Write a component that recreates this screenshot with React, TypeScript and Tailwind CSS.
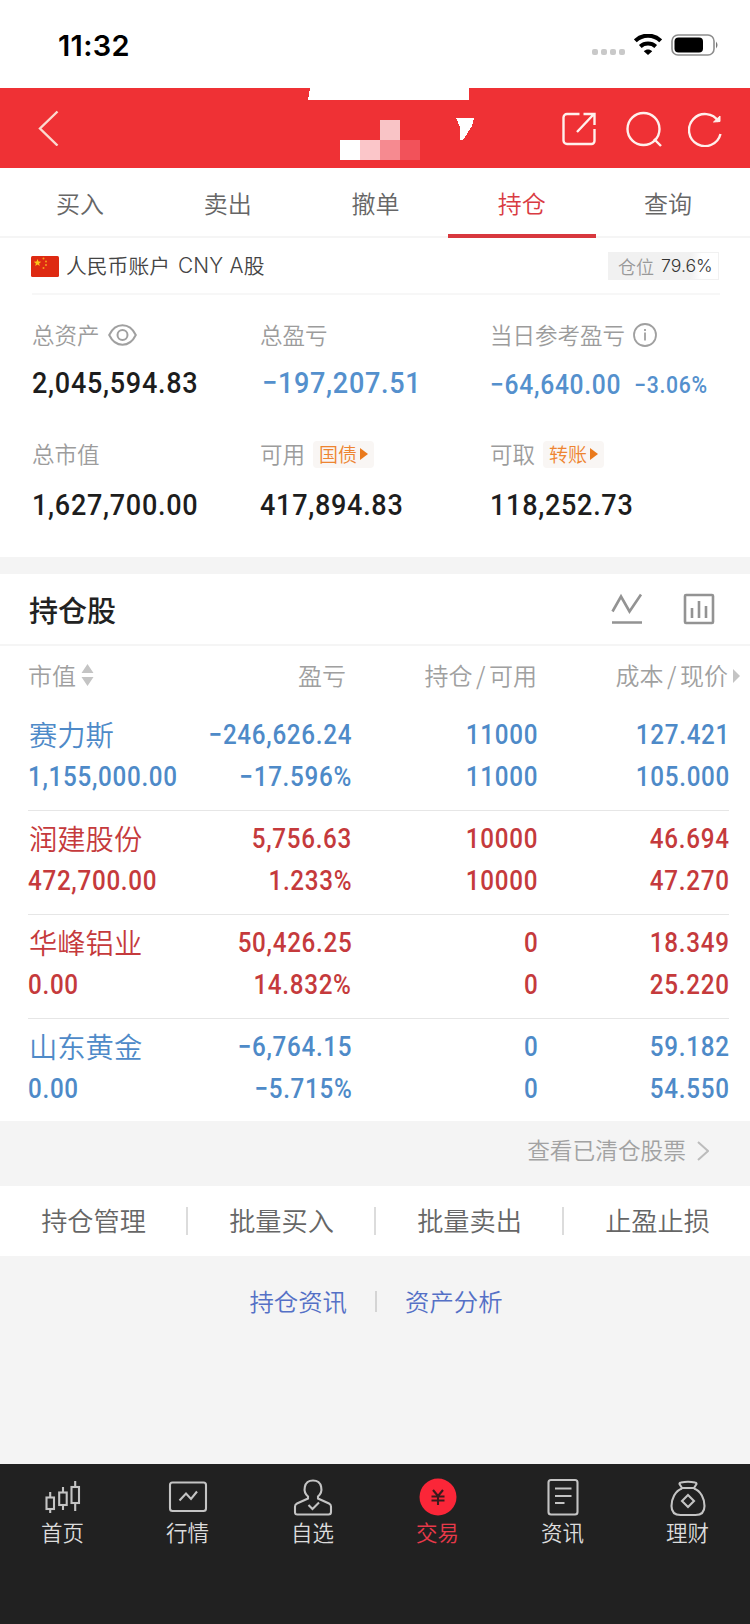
import React from "react";

type Tone = "up" | "down";

const toneClass: Record<Tone, string> = {
  up: "text-[#c53a3c]",
  down: "text-[#4e8ac8]",
};

const holdings: {
  name: string;
  value: string;
  profit: string;
  rate: string;
  held: string;
  usable: string;
  cost: string;
  price: string;
  tone: Tone;
}[] = [
  { name: "赛力斯", value: "1,155,000.00", profit: "−246,626.24", rate: "−17.596%", held: "11000", usable: "11000", cost: "127.421", price: "105.000", tone: "down" },
  { name: "润建股份", value: "472,700.00", profit: "5,756.63", rate: "1.233%", held: "10000", usable: "10000", cost: "46.694", price: "47.270", tone: "up" },
  { name: "华峰铝业", value: "0.00", profit: "50,426.25", rate: "14.832%", held: "0", usable: "0", cost: "18.349", price: "25.220", tone: "up" },
  { name: "山东黄金", value: "0.00", profit: "−6,764.15", rate: "−5.715%", held: "0", usable: "0", cost: "59.182", price: "54.550", tone: "down" },
];

function Num({ children, className = "origin-left scale-x-[0.88]" }: { children: string; className?: string }) {
  return (
    <span className={`inline-block whitespace-nowrap font-['Roboto',sans-serif] font-medium tracking-[0.8px] ${className}`}>
      {children}
    </span>
  );
}

function BigNum({ children }: { children: string }) {
  return <Num className="origin-left scale-x-[0.9] text-[30px]">{children}</Num>;
}

function RightNum({ children }: { children: string }) {
  return (
    <div className="-mr-px flex justify-end pt-px">
      <Num className="origin-right scale-x-[0.88]">{children}</Num>
    </div>
  );
}

function StatusBar() {
  return (
    <div className="flex h-[88px] items-center justify-between pl-[58px] pr-[31px]">
      <span className="mt-[2px] font-['Inter',sans-serif] text-[29px] font-semibold leading-none tracking-[0.3px] text-black">11:32</span>
      <div className="mt-[1px] flex items-center">
        <div className="mr-[9px] mt-[15px] flex gap-[3px]">
          {[0, 1, 2, 3].map((i) => (
            <i key={i} className="size-[6px] rounded-[2px] bg-[#c9c9c9]" />
          ))}
        </div>
        <svg width="28" height="21" viewBox="0 0 28 21" className="mr-[9px]" fill="none" stroke="#000">
          <path d="M1.300 6.800C8.500 0 19.500 0 26.700 6.800" strokeWidth="4.200" />
          <path d="M6.300 12.400C10.600 8.500 17.400 8.500 21.700 12.400" strokeWidth="4" />
          <path d="M9.800 17.200C12.300 15 15.700 15 18.200 17.200L14 21Z" fill="#000" stroke="none" />
        </svg>
        <svg width="48" height="22" viewBox="0 0 48 22">
          <rect x="1" y="1" width="42" height="20" rx="6" fill="none" stroke="#8d8d8d" strokeWidth="1.600" />
          <rect x="3.500" y="3.500" width="28.500" height="15" rx="4" fill="#000" />
          <path d="M45 7.500q3 3.500 0 7z" fill="#777" />
        </svg>
      </div>
    </div>
  );
}

function Header() {
  return (
    <div className="relative flex h-[80px] items-center justify-between bg-[#ef3135] pl-[38px] pr-[28px]">
      <svg width="22" height="36" viewBox="0 0 22 36" fill="none" stroke="#fbd9cf" strokeWidth="2.400">
        <path d="M19.500 1.500L2 18.500l17.500 17" />
      </svg>
      <div className="flex items-center pt-px">
        <svg width="34" height="34" viewBox="0 0 34 34" fill="none" stroke="#fff0ec" strokeWidth="2.400" className="mr-[30px]">
          <path d="M17.500 2H5a3.500 3.500 0 0 0-3.500 3.500v23A3.500 3.500 0 0 0 5 32h24.500a3 3 0 0 0 3-3V17" />
          <path d="M15 20L31.500 2.500M21.500 2h11v11" />
        </svg>
        <svg width="36" height="36" viewBox="0 0 36 36" fill="none" stroke="#fff0ec" strokeWidth="2.400" className="mr-[26px]">
          <circle cx="17.500" cy="18" r="16" />
          <path d="M28 28l7 7" />
        </svg>
        <svg width="34" height="36" viewBox="0 0 34 36" fill="none" stroke="#fff0ec" strokeWidth="2.400">
          <path d="M32.500 23A16 16 0 1 1 30.500 10.500" />
          <path d="M25.500 11L32 10.500V5z" fill="#fff0ec" strokeWidth="1" />
        </svg>
      </div>
      <svg width="170" height="80" viewBox="0 0 170 80" className="absolute left-[308px] top-0" shapeRendering="crispEdges">
        <path d="M2 0H161V12H0z" fill="#fff" />
        <rect x="72" y="32" width="20" height="20" fill="#f9c4c6" />
        <rect x="32" y="52" width="20" height="20" fill="#fff" />
        <rect x="52" y="52" width="20" height="20" fill="#fbc6c9" />
        <rect x="72" y="52" width="20" height="20" fill="#f68a90" />
        <rect x="92" y="52" width="20" height="20" fill="#f2525a" />
        <path d="M148 30H166L164 38L155 52H152V39z" fill="#fff" />
      </svg>
    </div>
  );
}

function Tabs() {
  return (
    <div className="flex h-[70px] border-b-2 border-[#f5f5f5] pl-[6px] pr-[8px]">
      {["买入", "卖出", "撤单", "持仓", "查询"].map((t) => (
        <div
          key={t}
          className={
            t === "持仓"
              ? "-mx-[1.500px] -mb-[2px] flex flex-1 items-center justify-center border-b-[4px] border-[#d8383e] pt-[4px] text-[24px] text-[#d93b42]"
              : "flex flex-1 items-center justify-center pt-[2px] text-[24px] text-[#666]"
          }
        >
          {t}
        </div>
      ))}
    </div>
  );
}

function Tag({ children }: { children: string }) {
  return (
    <span className="-ml-px flex h-[27px] items-center gap-[3px] rounded-sm bg-[#f9f6f4] px-[6px] text-[19px] text-[#ee8430]">
      {children}
      <svg width="8" height="12" viewBox="0 0 8 12"><path d="M0 0L8 6L0 12z" fill="#ea7a1c" /></svg>
    </span>
  );
}

function Summary() {
  const label = "flex h-[30px] items-center text-[22.500px] text-[#9c9c9c]";
  return (
    <div className="h-[319px] px-[32px]">
      <div className="-mr-[2px] flex h-[57px] items-center justify-between border-b-2 border-[#f7f7f7]">
        <div className="-ml-px flex items-center pt-px text-[20.800px] text-[#444]">
          <svg width="28" height="21" viewBox="0 0 28 21" className="mr-[7px]">
            <rect width="28" height="21" rx="1.500" fill="#de2a12" />
            <path d="M6.500 3l1 2.600 2.700.1-2.100 1.700.7 2.600-2.300-1.500L4.200 10l.7-2.600-2.100-1.700 2.700-.1z" fill="#fcc419" />
            <circle cx="12.500" cy="2.500" r="1" fill="#f5a01c" />
            <circle cx="15" cy="5.500" r="1" fill="#f5a01c" />
            <circle cx="15" cy="9" r="1" fill="#f5a01c" />
            <circle cx="12.500" cy="12" r="1" fill="#f5a01c" />
          </svg>
          人民币账户<span className="ml-[8px] whitespace-pre font-['Inter',sans-serif] tracking-[0.2px]">CNY A</span>股
        </div>
        <div className="mr-px mt-px flex h-[28px] w-[111px] items-center border border-[#f1f1f1] bg-linear-to-r from-[#f1f1f1] from-75% to-white to-85% pl-[9px] text-[18px] text-[#999]">
          仓位<span className="ml-[7px] font-['Inter',sans-serif] text-[17.700px] text-[#333]">79.6%</span>
        </div>
      </div>
      <div className="grid grid-cols-[228px_230px_1fr] pt-[25px]">
        <div className={label}>
          总资产
          <svg width="29" height="22" viewBox="0 0 29 22" className="ml-[8px]" fill="none" stroke="#a0a0a0" strokeWidth="2">
            <path d="M1.200 11C7.500-2 21.500-2 27.800 11C21.500 24 7.500 24 1.200 11z" />
            <circle cx="14.500" cy="11" r="5" />
          </svg>
        </div>
        <div className={label}>总盈亏</div>
        <div className={label}>
          当日参考盈亏
          <svg width="24" height="24" viewBox="0 0 24 24" className="ml-[8px]" fill="none" stroke="#a0a0a0" strokeWidth="1.800">
            <circle cx="12" cy="12" r="11" />
            <path d="M12 9.500v8M12 6v2" />
          </svg>
        </div>
        <div className="flex h-[64px] items-center text-[#1d1d1d]"><BigNum>2,045,594.83</BigNum></div>
        <div className="flex h-[64px] items-center pl-[2px] text-[#5490cd]"><BigNum>−197,207.51</BigNum></div>
        <div className="flex h-[64px] items-center pt-[2px] text-[#5490cd]">
          <span className="w-[144px] text-[28px]"><Num>−64,640.00</Num></span>
          <span className="pt-[3px] text-[23px]"><Num className="origin-left scale-x-[0.92]">−3.06%</Num></span>
        </div>
        <div className={`mt-[25px] ${label}`}>总市值</div>
        <div className={`mt-[25px] ${label}`}>可用<span className="w-[9px]" /><Tag>国债</Tag></div>
        <div className={`mt-[25px] ${label}`}>可取<span className="w-[9px]" /><Tag>转账</Tag></div>
        <div className="flex h-[70px] items-center text-[#1d1d1d]"><BigNum>1,627,700.00</BigNum></div>
        <div className="flex h-[70px] items-center text-[#1d1d1d]"><BigNum>417,894.83</BigNum></div>
        <div className="flex h-[70px] items-center text-[#1d1d1d]"><BigNum>118,252.73</BigNum></div>
      </div>
    </div>
  );
}

const cols = "grid grid-cols-[170px_153px_186px_1fr]";

function Holdings() {
  return (
    <>
      <div className="flex h-[72px] items-center justify-between border-b-2 border-[#f5f5f5] pl-[29px] pr-[35px]">
        <span className="pt-[2px] text-[29px] font-medium text-[#222]">持仓股</span>
        <div className="flex gap-[40px]">
          <svg width="32" height="32" viewBox="0 0 32 32" fill="none" stroke="#939393" strokeWidth="2.600">
            <path d="M1.500 18.500L10 3.500L18.500 18.500L30 1.500M1 29.500H31" />
          </svg>
          <svg width="32" height="32" viewBox="0 0 32 32" fill="none" stroke="#939393" strokeWidth="2.600">
            <rect x="2" y="2" width="28" height="28" rx="1" />
            <path d="M9 15v10M16 8v17M23 13v12" />
          </svg>
        </div>
      </div>
      <div className={`${cols} h-[61px] items-center pb-[3px] pl-[28px] pr-[22px] text-[24px] text-[#a0a0a0]`}>
        <div className="flex items-center gap-[5px]">
          市值
          <svg width="13" height="22" viewBox="0 0 13 22" fill="#c4c4c4"><path d="M6.500 0L12.500 9H.5zM6.500 22L12.500 13H.5z" /></svg>
        </div>
        <div className="pr-[5px] text-right">盈亏</div>
        <div className="text-right">持仓<span className="mx-[3.500px]">/</span>可用</div>
        <div className="relative text-right">
          成本<span className="mx-[3.500px]">/</span>现价
          <svg width="7" height="14" viewBox="0 0 7 14" fill="#c4c4c4" className="absolute -right-[12px] top-[12px]"><path d="M0 0L7 7L0 14z" /></svg>
        </div>
      </div>
      <div className="h-[414px] pl-[28px] pr-[21px]">
        {holdings.map((h, i) => (
          <div key={h.name} className={`h-[104px] pt-[6px] ${i < 3 ? "border-b border-[#e6e6e6]" : ""} ${toneClass[h.tone]}`}>
            <div className={`${cols} h-[41px] items-center text-[27.500px]`}>
              <span className="whitespace-nowrap pl-px text-[28.300px]">{h.name}</span>
              <RightNum>{h.profit}</RightNum>
              <RightNum>{h.held}</RightNum>
              <RightNum>{h.cost}</RightNum>
            </div>
            <div className={`${cols} h-[41px] items-center text-[27.500px]`}>
              <div><Num>{h.value}</Num></div>
              <RightNum>{h.rate}</RightNum>
              <RightNum>{h.usable}</RightNum>
              <RightNum>{h.price}</RightNum>
            </div>
          </div>
        ))}
      </div>
    </>
  );
}

const navIcon = "h-[40px] w-[40px]";

function BottomNav() {
  const s = { fill: "none", stroke: "#c4c4c4", strokeWidth: 2.1 };
  const items: [string, React.ReactNode][] = [
    ["首页", <svg className={navIcon} viewBox="0 0 40 40" {...s}><rect x="3.500" y="19.500" width="7.500" height="11.500" /><rect x="16.200" y="14.500" width="7.500" height="12.500" /><rect x="28.500" y="9" width="7.500" height="16" /><path d="M7.200 14v5M7.200 31v4M20 9v5M20 27v5M32.200 3v6M32.200 25v8" /></svg>],
    ["行情", <svg className={navIcon} viewBox="0 0 40 40" {...s}><rect x="2" y="4.500" width="36" height="28.500" rx="2.500" /><path d="M11.500 22.500l6.500-7 5 5.500 6-7.500" /></svg>],
    ["自选", <svg className={navIcon} viewBox="0 0 40 40" {...s}><path d="M15 20.500v-2C9.500 14 10.500 2.500 20 2.500s10.500 11.500 5 16v2L36 25.500q2 1 2 3V34q0 2.500-2.500 2.500h-31Q2 36.500 2 34v-5.500q0-2 2-3z" /><path d="M15.500 27l4 4 6.500-6.500" /></svg>],
    ["交易", <svg className={navIcon} viewBox="0 0 40 40"><circle cx="20" cy="19" r="18.500" fill="#fb2638" /><path d="M15 12l5 6 5-6M13.500 18.500h13M13.500 22.500h13M20 18v9" fill="none" stroke="#3a1a1c" strokeWidth="2.100" /></svg>],
    ["资讯", <svg className={navIcon} viewBox="0 0 40 40" {...s}><rect x="5.500" y="2" width="29" height="34.500" rx="2.500" /><path d="M12 10.500h16.500M12 18h16.500M12 25h9.500" /></svg>],
    ["理财", <svg className={navIcon} viewBox="0 0 40 40" {...s}><path d="M14 10L11.500 6Q11.500 4.500 13 4.500q7-1.500 14 0 1.500 0 1.500 1.500L26 10z" /><path d="M14 10.500C7 13 3.500 21 3.500 28q0 9 9 9h15q9 0 9-9c0-7-3.500-15-10.500-17.500" /><path d="M20 17l6 6-6 6-6-6z" /></svg>],
  ];
  return (
    <div className="flex h-[160px] bg-[#212121] pt-[14px]">
      {items.map(([name, icon]) => (
        <div key={name} className={`flex flex-1 flex-col items-center text-[21.500px] leading-[28px] ${name === "交易" ? "text-[#e8394a]" : "text-[#dcdcdc]"}`}>
          {icon}
          {name}
        </div>
      ))}
    </div>
  );
}

export default function App() {
  return (
    <div className="h-[1624px] w-[750px] overflow-hidden bg-white font-['Noto_Sans_CJK_SC',sans-serif] font-[350]">
      <StatusBar />
      <Header />
      <Tabs />
      <Summary />
      <div className="h-[17px] bg-[#f4f4f4]" />
      <Holdings />
      <div className="flex h-[65px] items-center justify-end gap-[11px] bg-[#f4f4f4] pb-[6px] pr-[41px] text-[22.700px] text-[#a2a2a2]">
        查看已清仓股票
        <svg width="12" height="20" viewBox="0 0 12 20" fill="none" stroke="#bcbcbc" strokeWidth="2"><path d="M1 1l10 9-10 9" /></svg>
      </div>
      <div className="flex h-[70px] items-center text-[26.200px] text-[#666]">
        {["持仓管理", "批量买入", "批量卖出", "止盈止损"].map((t, i) => (
          <React.Fragment key={t}>
            {i > 0 && <i className="h-[28px] w-[2px] bg-[#dcdcdc]" />}
            <span className="flex-1 pl-px text-center">{t}</span>
          </React.Fragment>
        ))}
      </div>
      <div className="flex h-[208px] justify-center bg-[#f4f4f4] pl-[2px] pt-[25px] text-[24.400px] leading-[40px] text-[#5470c6]">
        <span>持仓资讯</span>
        <i className="mx-[28px] mt-[10px] h-[21px] w-[2px] bg-[#d4d4d4]" />
        <span>资产分析</span>
      </div>
      <BottomNav />
    </div>
  );
}
